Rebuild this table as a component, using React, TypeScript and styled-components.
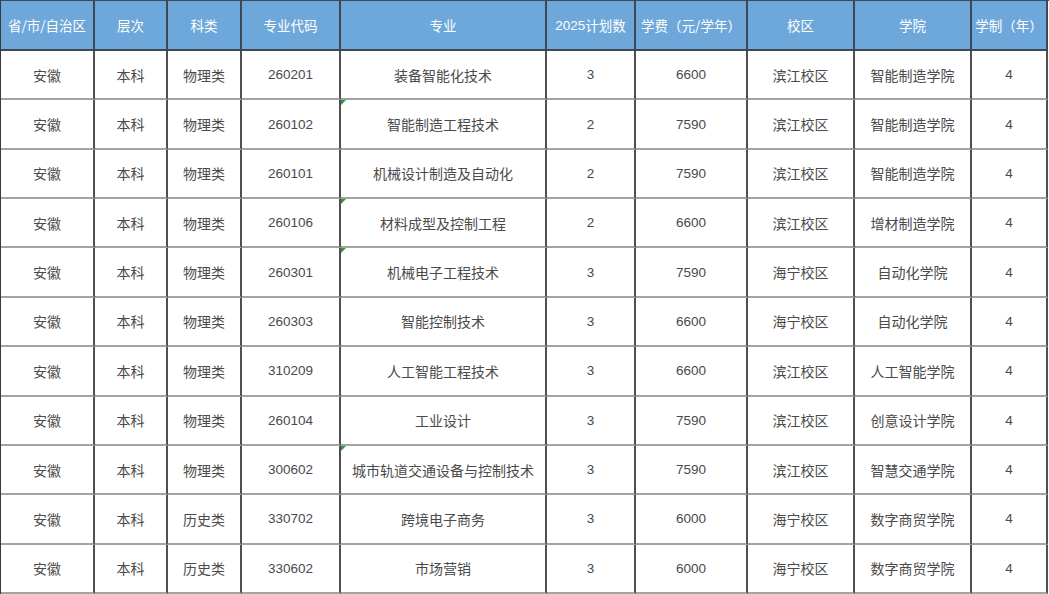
import React from "react";
import styled, { createGlobalStyle } from "styled-components";

const Global = createGlobalStyle`
  html, body { margin: 0; padding: 0; background: #ffffff; }
  body { font-family: "Noto Sans CJK SC", "Noto Sans", sans-serif; }
`;

const Table = styled.div`
  box-sizing: border-box;
  width: 1049px;
  height: 594px;
  display: grid;
  grid-template-columns: 94px 73px 74px 99px 206px 89px 112px 107px 117px 76px;
  grid-template-rows: 50px repeat(11, 1fr);
  border-top: 1px solid #3a4a5a;
  border-left: 1px solid #3a3a3a;
  overflow: hidden;
`;

const HeadCell = styled.div`
  box-sizing: border-box;
  display: flex;
  align-items: center;
  justify-content: center;
  background: #6ea7d9;
  color: #ffffff;
  font-size: 13.5px;
  white-space: nowrap;
  border-right: 2px solid #3d4852;
  border-bottom: 2px solid #3d4852;
`;

const Cell = styled.div<{ $flag?: boolean }>`
  position: relative;
  box-sizing: border-box;
  display: flex;
  align-items: center;
  justify-content: center;
  color: #4a4a4a;
  font-size: 14px;
  white-space: nowrap;
  border-right: 2px solid #505050;
  border-bottom: 2px solid #a3a3a3;
  &::before {
    content: "";
    display: ${(p) => (p.$flag ? "block" : "none")};
    position: absolute;
    left: 0;
    top: 0;
    width: 0;
    height: 0;
    border-top: 5px solid #2a9a3a;
    border-right: 5px solid transparent;
  }
`;

const Num = styled.span`
  font-family: "Liberation Sans", Arial, sans-serif;
  font-size: 13.5px;
`;

const headers: React.ReactNode[] = [
  "省/市/自治区",
  "层次",
  "科类",
  "专业代码",
  "专业",
  <><Num>2025</Num>计划数</>,
  "学费（元/学年）",
  "校区",
  "学院",
  "学制（年）",
];

type Row = [string, string, string, string, string, string, string, string, string, string];

const rows: Row[] = [
  ["安徽", "本科", "物理类", "260201", "装备智能化技术", "3", "6600", "滨江校区", "智能制造学院", "4"],
  ["安徽", "本科", "物理类", "260102", "智能制造工程技术", "2", "7590", "滨江校区", "智能制造学院", "4"],
  ["安徽", "本科", "物理类", "260101", "机械设计制造及自动化", "2", "7590", "滨江校区", "智能制造学院", "4"],
  ["安徽", "本科", "物理类", "260106", "材料成型及控制工程", "2", "6600", "滨江校区", "增材制造学院", "4"],
  ["安徽", "本科", "物理类", "260301", "机械电子工程技术", "3", "7590", "海宁校区", "自动化学院", "4"],
  ["安徽", "本科", "物理类", "260303", "智能控制技术", "3", "6600", "海宁校区", "自动化学院", "4"],
  ["安徽", "本科", "物理类", "310209", "人工智能工程技术", "3", "6600", "滨江校区", "人工智能学院", "4"],
  ["安徽", "本科", "物理类", "260104", "工业设计", "3", "7590", "滨江校区", "创意设计学院", "4"],
  ["安徽", "本科", "物理类", "300602", "城市轨道交通设备与控制技术", "3", "7590", "滨江校区", "智慧交通学院", "4"],
  ["安徽", "本科", "历史类", "330702", "跨境电子商务", "3", "6000", "海宁校区", "数字商贸学院", "4"],
  ["安徽", "本科", "历史类", "330602", "市场营销", "3", "6000", "海宁校区", "数字商贸学院", "4"],
];

const flagged = new Set([1, 3, 4, 8]);
const numericCols = new Set([3, 5, 6, 9]);

export default function App() {
  return (
    <>
      <Global />
      <Table>
        {headers.map((h, i) => (
          <HeadCell key={`h${i}`}>{h}</HeadCell>
        ))}
        {rows.map((r, ri) =>
          r.map((v, ci) => (
            <Cell key={`${ri}-${ci}`} $flag={ci === 4 && flagged.has(ri)}>
              {numericCols.has(ci) ? <Num>{v}</Num> : v}
            </Cell>
          ))
        )}
      </Table>
    </>
  );
}
